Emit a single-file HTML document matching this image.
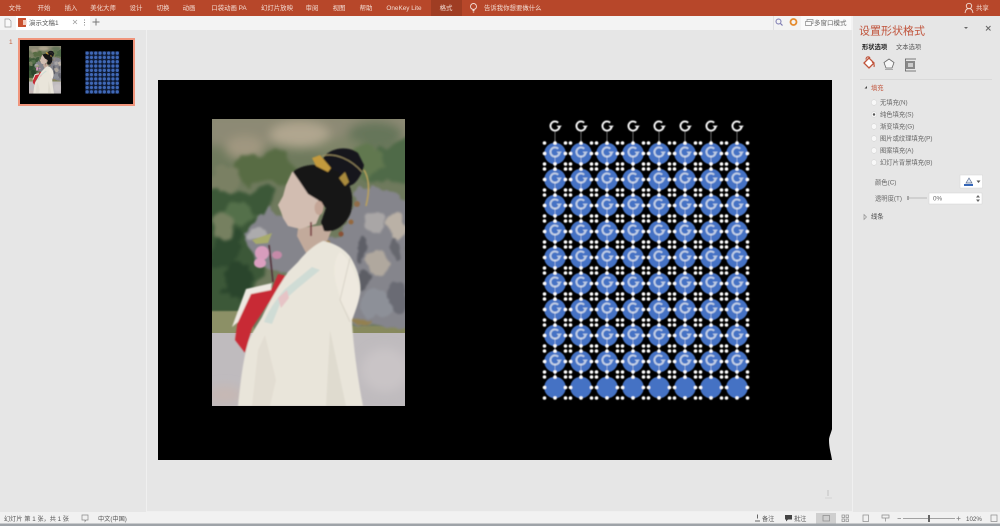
<!DOCTYPE html>
<html><head><meta charset="utf-8"><title>PowerPoint</title>
<style>
html,body{margin:0;padding:0;width:1000px;height:526px;overflow:hidden;background:#e6e6e6}
svg{display:block}
text{font-family:"Liberation Sans","Noto Sans CJK SC",sans-serif}
</style></head><body>
<svg xmlns="http://www.w3.org/2000/svg" width="1000" height="526" viewBox="0 0 1000 526">
<defs>
<filter id="b5" x="-30%" y="-30%" width="160%" height="160%" color-interpolation-filters="sRGB"><feTurbulence type="fractalNoise" baseFrequency=".045" numOctaves="3" seed="4" result="n"/><feDisplacementMap in="SourceGraphic" in2="n" scale="26" xChannelSelector="R" yChannelSelector="G"/><feGaussianBlur stdDeviation="1.600"/></filter>
<filter id="b2" x="-30%" y="-30%" width="160%" height="160%" color-interpolation-filters="sRGB"><feTurbulence type="fractalNoise" baseFrequency=".06" numOctaves="3" seed="9" result="n"/><feDisplacementMap in="SourceGraphic" in2="n" scale="14" xChannelSelector="R" yChannelSelector="G"/><feGaussianBlur stdDeviation="1.100"/></filter>
<filter id="bs" x="-30%" y="-30%" width="160%" height="160%"><feGaussianBlur stdDeviation="5"/></filter>
<filter id="b1" x="-10%" y="-10%" width="120%" height="120%"><feGaussianBlur stdDeviation=".75"/></filter>
<filter id="t" x="-5%" y="-20%" width="110%" height="140%"><feGaussianBlur stdDeviation=".3"/></filter>
<filter id="gb" x="-2%" y="-2%" width="104%" height="104%"><feGaussianBlur stdDeviation=".4"/></filter>
<clipPath id="pc"><rect x="212" y="119" width="193" height="287"/></clipPath>
<g id="rot"><path d="M3.2,-3.300A4.600,4.600 0 1 0 4.600,0.600" fill="none" stroke="#f4f4f4" stroke-width="1.900"/><path d="M1.500,-.4L6.800,-.4L4.300,2.800z" fill="#f4f4f4"/></g>
<g id="dots" fill="#fff"><circle cx="2.500" cy="2.500" r="1.800"/><circle cx="13" cy="2.500" r="1.800"/><circle cx="23.500" cy="2.500" r="1.800"/><circle cx="2.500" cy="13" r="1.800"/><circle cx="23.500" cy="13" r="1.800"/><circle cx="2.500" cy="23.500" r="1.800"/><circle cx="13" cy="23.500" r="1.800"/><circle cx="23.500" cy="23.500" r="1.800"/></g>
<pattern id="g1" patternUnits="userSpaceOnUse" x="542" y="140.500" width="26" height="26">
<circle cx="13" cy="13" r="10.800" fill="#4472c4"/>
<path d="M13,0V2M13,15V26" stroke="#c9d2e4" stroke-width=".6"/>
<use href="#rot" transform="translate(13,11.500)" opacity=".7"/>
<use href="#dots"/>
</pattern>
<pattern id="g2" patternUnits="userSpaceOnUse" x="542" y="374.500" width="26" height="26">
<circle cx="13" cy="13" r="10.800" fill="#4472c4"/>
<path d="M13,0V2" stroke="#c9d2e4" stroke-width=".6"/>
<use href="#dots"/>
</pattern>
<pattern id="g0" patternUnits="userSpaceOnUse" x="542" y="119" width="26" height="22">
<use href="#rot" transform="translate(13,7)"/>
<path d="M13,12V22" stroke="#999" stroke-width=".7"/>
</pattern>
<pattern id="th" patternUnits="userSpaceOnUse" x="85" y="51" width="4.300" height="4.300">
<rect width="4.300" height="4.300" fill="#0e1a34"/><circle cx="2.150" cy="2.150" r="1.650" fill="#4069b8"/>
</pattern>
<g id="photo"><g clip-path="url(#pc)">
<rect x="212" y="119" width="193" height="287" fill="#6f7a5d"/>
<g filter="url(#bs)">
<rect x="205" y="112" width="210" height="34" fill="#8d8a74"/>
<ellipse cx="300" cy="135" rx="30" ry="13" fill="#b0a68f"/>
<ellipse cx="245" cy="148" rx="20" ry="12" fill="#a09780"/>
<ellipse cx="375" cy="135" rx="28" ry="14" fill="#66765a"/>
<ellipse cx="340" cy="148" rx="24" ry="10" fill="#7e8468"/>
</g>
<g filter="url(#b5)">
<ellipse cx="395" cy="165" rx="26" ry="22" fill="#4f6a48"/>
<ellipse cx="365" cy="160" rx="20" ry="14" fill="#61784f"/>
<ellipse cx="262" cy="168" rx="36" ry="14" fill="#586c44"/>
<ellipse cx="222" cy="185" rx="16" ry="14" fill="#7a8063"/>
<path d="M195,190H272V232L250,325H195z" fill="#3c5838"/>
<ellipse cx="240" cy="215" rx="18" ry="12" fill="#54704a"/>
<ellipse cx="228" cy="250" rx="14" ry="18" fill="#2e4a2f"/>
<ellipse cx="240" cy="285" rx="18" ry="20" fill="#2a452c"/>
<ellipse cx="222" cy="225" rx="9" ry="12" fill="#768060"/>
</g>
<g filter="url(#b1)">
<path d="M208,311H245L258,336H208z" fill="#8c9066"/>
<rect x="345" y="326" width="70" height="8" fill="#87895d"/>
</g>
<g filter="url(#b2)">
<path d="M243,232L272,208L300,230L340,240L358,186L392,192L410,206V327H345L335,300L258,264z" fill="#85858c"/>
<ellipse cx="375" cy="222" rx="13" ry="11" fill="#a9a6a6"/>
<ellipse cx="397" cy="226" rx="8" ry="13" fill="#bab1a6"/>
<ellipse cx="258" cy="236" rx="11" ry="6" fill="#acabad"/>
<ellipse cx="378" cy="262" rx="10" ry="13" fill="#b0a89e"/>
<ellipse cx="375" cy="305" rx="17" ry="14" fill="#8d9098"/>
<ellipse cx="398" cy="298" rx="9" ry="16" fill="#6a6b74"/>
<ellipse cx="362" cy="250" rx="5" ry="16" fill="#5e5f67"/>
<ellipse cx="395" cy="250" rx="5" ry="12" fill="#66676e"/>
<ellipse cx="362" cy="280" rx="7" ry="12" fill="#5d5e65"/>
<ellipse cx="362" cy="323" rx="12" ry="3.500" fill="#93804f"/>
</g>
<rect x="212" y="333" width="193" height="73" fill="#bfbbbe"/>
<g filter="url(#bs)">
<ellipse cx="385" cy="370" rx="24" ry="22" fill="#c9c4c6"/>
<ellipse cx="225" cy="395" rx="18" ry="9" fill="#c6b8b4"/>
</g>
<g filter="url(#b1)">
<path d="M298,228L297,236L306,253L326,244L334,224z" fill="#c2aa9b"/>
<path d="M292,172L286,185L283,196L278,205L281,212L283,218L288,226L300,229L316,224L324,205L302,168z" fill="#d2bdb1"/>
<path d="M293,172C300,165 318,162 332,168C350,175 355,195 351,212C346,226 334,233 324,231L321,222L326,208L318,200L308,194L300,182z" fill="#131317"/>
<path d="M322,166C320,150 345,143 358,153L364,165C362,175 355,187 347,186L338,172z" fill="#17171b"/>
<ellipse cx="319" cy="208" rx="4.500" ry="7" fill="#c4a596"/>
<path d="M312,158L320,155L331,168L328,172L316,166z" fill="#c39a3c"/>
<path d="M339,178L345,172L349,182L345,186z" fill="#a98a3c"/>
<path d="M322,156C335,152 352,160 362,172" fill="none" stroke="#a99a68" stroke-width=".9"/>
<path d="M364,170C369,178 370,190 366,206" fill="none" stroke="#bfa35a" stroke-width="1.500"/>
<circle cx="357" cy="204" r="3" fill="#8f6d48"/><circle cx="351" cy="222" r="2.500" fill="#94683e"/><circle cx="341" cy="234" r="2.500" fill="#8a4f36"/><circle cx="328" cy="243" r="2.500" fill="#a38248"/>
<path d="M311,222V236" stroke="#6c1f2a" stroke-width="1.500"/>
<path d="M235,340L245,353L252,328L268,304L285,284L291,277L278,274L272,288L248,290L238,318z" fill="#c82a34"/>
<path d="M232,327L246,289L272,283L271,290L251,294L238,322z" fill="#eee9e2"/>
<path d="M298,262C304,254 314,245 323,241C335,243 346,250 351,258C358,270 362,284 360,294C358,305 354,314 352,320C353,345 358,380 363,406H238C240,385 243,360 248,343C252,332 258,324 262,317C270,300 280,284 288,272z" fill="#e9e5da"/>
<path d="M340,252C348,258 358,275 360,293C358,305 354,314 352,320C346,312 340,300 338,290C334,278 332,262 340,252z" fill="#eee9df"/>
<path d="M264,322C270,308 276,300 284,290L312,267L320,270L298,288L280,304L272,324z" fill="#cfdcd5"/>
<path d="M278,298L287,290L289,298L281,308z" fill="#e6c4c6"/>
<path d="M350,258L340,300L350,322" fill="none" stroke="#d3cec2" stroke-width=".8"/>
<path d="M265,335L276,380L270,406H252L258,350z" fill="#e2ddd2"/>
<path d="M330,330L346,406H326z" fill="#dfdbcf"/>
<ellipse cx="262" cy="253" rx="7" ry="7" fill="#d89dbd"/>
<ellipse cx="277" cy="255" rx="5" ry="4" fill="#c58aa8"/>
<ellipse cx="260" cy="263" rx="6" ry="5" fill="#dc9fc0"/>
<path d="M252,240L272,233L268,243L256,244z" fill="#a8ab6c"/>
<path d="M269,245L273,282" stroke="#4e2c36" stroke-width="1.500"/>
</g>
</g></g>
</defs>

<!-- base -->
<rect width="1000" height="526" fill="#e6e6e6"/>
<!-- title bar -->
<rect width="1000" height="16" fill="#b7472a"/>
<rect x="431" y="0" width="31" height="16" fill="#9f3d23"/>
<g fill="#f3dcd3" font-size="6.400" text-anchor="middle" filter="url(#t)">
<text x="15" y="10">文件</text><text x="44" y="10">开始</text><text x="71" y="10">插入</text><text x="103" y="10">美化大师</text><text x="136" y="10">设计</text><text x="163" y="10">切换</text><text x="189" y="10">动画</text><text x="229" y="10">口袋动画 PA</text><text x="277" y="10">幻灯片放映</text><text x="312" y="10">审阅</text><text x="339" y="10">视图</text><text x="366" y="10">帮助</text><text x="404" y="10">OneKey Lite</text><text x="446" y="10">格式</text>
<text x="484" y="10" text-anchor="start">告诉我你想要做什么</text><text x="976" y="10" text-anchor="start">共享</text>
</g>
<g fill="none" stroke="#f3dcd3" stroke-width=".9">
<circle cx="473.500" cy="6.500" r="3"/><path d="M472.500,10.500h2M472.800,12h1.400"/>
<circle cx="969" cy="6" r="2.700"/><path d="M965,13c.5-3.500 2-4.500 4-4.500s3.500,1 4,4.500"/>
</g>
<!-- tab strip -->
<rect y="16" width="853" height="14" fill="#f3f3f3"/>
<rect x="16" y="16" width="74" height="14" fill="#fff"/>
<rect x="801" y="16" width="50" height="14" fill="#fafafa"/>
<rect x="773" y="16" width="1" height="14" fill="#e2e2e2"/>
<path d="M5,19h4l2,2v6h-6z" fill="#f8f8f8" stroke="#9a9a9a" stroke-width=".7"/>
<rect x="18" y="18" width="8" height="9" rx=".5" fill="#c94f2d"/><rect x="23" y="20" width="3.500" height="5" fill="#f0c9bb"/>
<g font-size="6.500" fill="#555" filter="url(#t)"><text x="29" y="25">演示文稿1</text><text x="814" y="25" fill="#666">多窗口模式</text></g>
<path d="M73,20l4,4m0-4l-4,4" stroke="#999" stroke-width=".7"/>
<path d="M84.500,19.500v1M84.500,22v1M84.500,24.500v1" stroke="#888"/>
<path d="M92.500,22h7M96,18.500v7" stroke="#777" stroke-width="1"/>
<circle cx="778.500" cy="21.500" r="2.500" fill="none" stroke="#7a78b0" stroke-width="1"/><path d="M780.500,23.500l2,2" stroke="#7a78b0" stroke-width="1.200"/>
<circle cx="793.500" cy="22" r="3" fill="none" stroke="#e58b2e" stroke-width="1.800"/>
<path d="M805.500,21.500h6v4h-6zM807,21.500v-2h6v4h-1.500" fill="none" stroke="#888" stroke-width=".7"/>

<!-- left pane divider -->
<rect x="146" y="30" width="1" height="482" fill="#f0f0f0"/>
<rect x="147" y="511" width="706" height="1" fill="#efefef"/>
<!-- thumbnail -->
<text x="9" y="44" font-size="6.500" fill="#c0603f">1</text>
<rect x="18" y="38" width="117" height="68" fill="#f0957c"/>
<rect x="20" y="40" width="113" height="64" fill="#000"/>
<use href="#photo" transform="translate(29,46) scale(.166) translate(-212,-119)"/>
<rect x="85" y="51" width="34.400" height="43" fill="url(#th)"/>

<!-- slide -->
<rect x="158" y="80" width="674" height="380" fill="#000"/>
<path d="M833,424C832,432 829,436 829,440C829,448 831,453 832,460H833z" fill="#e6e6e6"/>
<use href="#photo"/>
<g filter="url(#gb)">
<rect x="542" y="119" width="208" height="22" fill="url(#g0)"/>
<rect x="542" y="140.500" width="208" height="234" fill="url(#g1)"/>
<rect x="542" y="374.500" width="208" height="26" fill="url(#g2)"/>
</g>
<path d="M828,490v6" stroke="#cfcfcf" stroke-width="1.500"/><path d="M825,498h7" stroke="#d4d4d4" stroke-width="1"/>

<!-- right pane -->
<rect x="853" y="16" width="147" height="496" fill="#e6e6e6"/>
<rect x="852" y="30" width="1" height="482" fill="#f0f0f0"/>
<text x="859" y="34.500" font-size="11" fill="#c0533a" filter="url(#t)">设置形状格式</text>
<path d="M964,27l2,2l2-2z" fill="#666"/>
<path d="M986,26l4.500,4.500m0-4.500l-4.500,4.500" stroke="#666" stroke-width="1"/>
<!-- pane icons -->
<path d="M864,63l5-5l5,5l-5,5z" fill="#fff" stroke="#c0533a" stroke-width="1.300"/>
<path d="M866,59.500c0-3 3-3.500 4-1.500M872,62c2,1 2.500,3 2,5" fill="none" stroke="#c0533a" stroke-width="1.100"/>
<path d="M889,59l5,3.500l-2,5.500h-6l-2-5.500z" fill="#f6f6f6" stroke="#666" stroke-width=".8"/><path d="M885,69.500h8" stroke="#aaa" stroke-width="1"/>
<rect x="906" y="61" width="9" height="8" fill="#888"/><path d="M905,59h11M905,71h11M905.500,59v12" stroke="#555" stroke-width=".7" fill="none"/><rect x="908" y="63" width="5" height="4" fill="#ccc"/>
<rect x="860" y="79" width="132" height="1" fill="#d9d9d9"/>
<path d="M864.500,88.500l2.500-2.500v2.500z" fill="#444"/>
<path d="M864,214.500l2.500,2.500l-2.500,2.500z" fill="none" stroke="#888" stroke-width=".6"/>
<g fill="#f8f8f8" stroke="#d0d0d0" stroke-width=".5">
<circle cx="874" cy="102.500" r="2.800"/><circle cx="874" cy="114.500" r="2.800"/><circle cx="874" cy="126.500" r="2.800"/><circle cx="874" cy="138.500" r="2.800"/><circle cx="874" cy="150.500" r="2.800"/><circle cx="874" cy="162.500" r="2.800"/>
</g>
<circle cx="874" cy="114.500" r="1.200" fill="#555"/>
<rect x="960" y="175" width="22.500" height="13" fill="#fff" stroke="#d5d5d5" stroke-width=".5"/>
<path d="M966,183l3-5l3,5z" fill="#dfe6f2" stroke="#5a6e90" stroke-width=".7"/><rect x="964" y="184" width="9" height="2" fill="#3566b8"/>
<path d="M976.500,180.500h4l-2,2.500z" fill="#555"/>
<path d="M908,196v4" stroke="#666" stroke-width="1"/><path d="M909,198h18" stroke="#aaa" stroke-width=".7"/>
<rect x="929" y="193" width="53" height="11" fill="#fff" stroke="#d2d2d2" stroke-width=".5"/>
<path d="M976,197.500h4l-2-2.500zM976,199.500h4l-2,2.500z" fill="#666"/>
<g font-size="6.300" filter="url(#t)">
<text x="862" y="49" fill="#222" font-weight="bold">形状选项</text><text x="896" y="49" fill="#555">文本选项</text>
<text x="871" y="90" fill="#c0533a">填充</text>
<g fill="#666">
<text x="880" y="104.500">无填充(N)</text><text x="880" y="116.500">纯色填充(S)</text><text x="880" y="128.500">渐变填充(G)</text><text x="880" y="140.500">图片或纹理填充(P)</text><text x="880" y="152.500">图案填充(A)</text><text x="880" y="164.500">幻灯片背景填充(B)</text>
<text x="875" y="184.500">颜色(C)</text><text x="875" y="200.500">透明度(T)</text><text x="933" y="200.500">0%</text>
</g>
<text x="871" y="218.500" fill="#444">线条</text>
</g>

<!-- status bar -->
<rect y="512" width="1000" height="11.500" fill="#f1f1f1"/>
<rect y="523.500" width="1000" height="2.500" fill="#9ea3a8"/>
<rect x="816" y="513" width="20" height="10.500" fill="#cfcfcf"/>
<g font-size="6.200" fill="#555" filter="url(#t)">
<text x="4" y="521">幻灯片 第 1 张，共 1 张</text><text x="98" y="521">中文(中国)</text>
<text x="762" y="521">备注</text><text x="794" y="521">批注</text><text x="966" y="521">102%</text>
</g>
<path d="M82,515h6v5h-2l-1,1.500v-1.500h-3z" fill="none" stroke="#888" stroke-width=".7"/>
<path d="M755,521h5M757.500,514.500v4" stroke="#666" stroke-width="1"/>
<path d="M785,515h7v4.500h-4l-2,2v-2h-1z" fill="#444"/>
<g fill="none" stroke="#8a8a8a" stroke-width=".7">
<rect x="823" y="515.500" width="6.500" height="5.500"/>
<rect x="842" y="515" width="2.500" height="2.500"/><rect x="846" y="515" width="2.500" height="2.500"/><rect x="842" y="519" width="2.500" height="2.500"/><rect x="846" y="519" width="2.500" height="2.500"/>
<rect x="863" y="515" width="5.500" height="6.500"/>
<path d="M882,515h7v3h-7zM885.500,518v3.500"/>
<rect x="991" y="515" width="6" height="6.500"/>
</g>
<path d="M897.500,518.500h3.500M903,518.500h52M956.500,518.500h4M958.500,516.500v4" stroke="#888" stroke-width=".8"/>
<rect x="928" y="515" width="2" height="7" fill="#666"/>
</svg>
</body></html>
